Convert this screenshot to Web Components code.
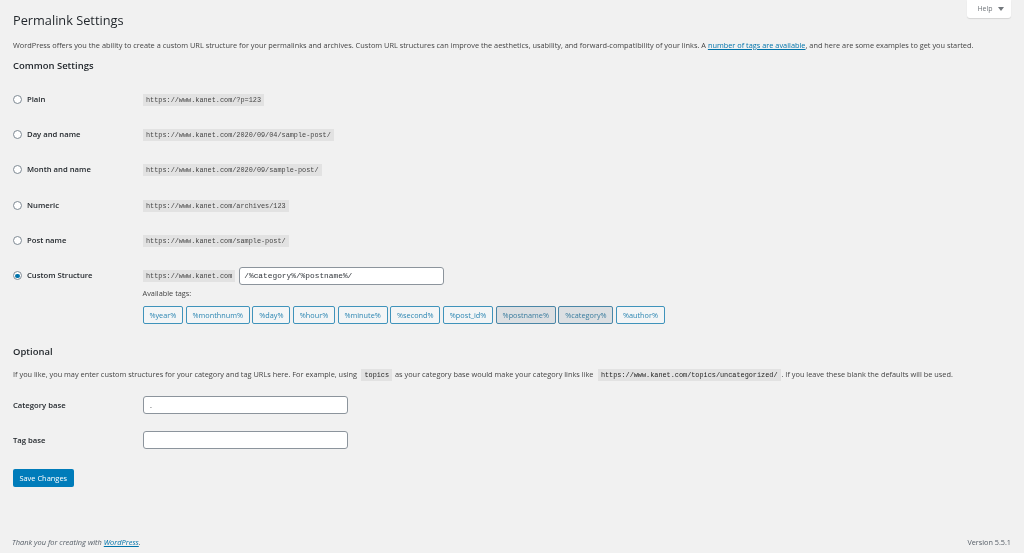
<!DOCTYPE html>
<html lang="en"><head><meta charset="utf-8"><title>Permalink Settings</title>
<style>
html,body{margin:0;padding:0;height:553px;overflow:hidden;background:#f1f1f1}
body{font:7.37px/13px "Open Sans",sans-serif;color:#444}
</style></head><body>
<wp-page>
  <wp-help slot="help"></wp-help>
  <h1 slot="title">Permalink Settings</h1>
  <wp-note slot="intro">WordPress offers you the ability to create a custom URL structure for your permalinks and archives. Custom URL structures can improve the aesthetics, usability, and forward-compatibility of your links. A <a href="#">number of tags are available</a>, and here are some examples to get you started.</wp-note>
  <wp-heading>Common Settings</wp-heading>
  <wp-options>
    <wp-radio-row label="Plain"><wp-code>https://www.kanet.com/?p=123</wp-code></wp-radio-row>
    <wp-radio-row label="Day and name"><wp-code>https://www.kanet.com/2020/09/04/sample-post/</wp-code></wp-radio-row>
    <wp-radio-row label="Month and name"><wp-code>https://www.kanet.com/2020/09/sample-post/</wp-code></wp-radio-row>
    <wp-radio-row label="Numeric"><wp-code>https://www.kanet.com/archives/123</wp-code></wp-radio-row>
    <wp-radio-row label="Post name"><wp-code>https://www.kanet.com/sample-post/</wp-code></wp-radio-row>
    <wp-radio-row label="Custom Structure" checked>
      <wp-structure base="https://www.kanet.com" value="/%category%/%postname%/"></wp-structure>
    </wp-radio-row>
  </wp-options>
  <wp-tags>
    <wp-tag>%year%</wp-tag><wp-tag>%monthnum%</wp-tag><wp-tag>%day%</wp-tag><wp-tag>%hour%</wp-tag><wp-tag>%minute%</wp-tag><wp-tag>%second%</wp-tag><wp-tag>%post_id%</wp-tag><wp-tag active>%postname%</wp-tag><wp-tag active>%category%</wp-tag><wp-tag>%author%</wp-tag>
  </wp-tags>
  <wp-heading optional>Optional</wp-heading>
  <wp-note optional>If you like, you may enter custom structures for your category and tag URLs here. For example, using <wp-code strong>topics</wp-code> as your category base would make your category links like <wp-code strong>https://www.kanet.com/topics/uncategorized/</wp-code>. If you leave these blank the defaults will be used.</wp-note>
  <wp-fields>
    <wp-field label="Category base" value="."></wp-field>
    <wp-field label="Tag base" value=""></wp-field>
  </wp-fields>
  <wp-save>Save Changes</wp-save>
  <wp-footer></wp-footer>
</wp-page>
<script>
function def(name, css, html){
  customElements.define(name, class extends HTMLElement{
    connectedCallback(){
      if(this.shadowRoot) return;
      const r=this.attachShadow({mode:'open'});
      r.innerHTML='<style>'+css+'</style>'+(typeof html==='function'?html(this):html);
    }
  });
}
const esc=s=>String(s).replace(/&/g,'&amp;').replace(/"/g,'&quot;').replace(/</g,'&lt;');
def('wp-page',`
  :host{display:flex;flex-direction:column;height:553px;box-sizing:border-box;padding:0 13px;filter:blur(.35px)}
  ::slotted(h1){font:400 12.75px/23px "Open Sans",sans-serif;color:#23282d;margin:0;padding-top:9px;height:23px}
  .help{display:flex;justify-content:flex-end;height:0}
`,`<div class="help"><slot name="help"></slot></div><slot name="title"></slot><slot name="intro"></slot><slot></slot>`);
def('wp-help',`
  :host{display:flex;align-items:center;justify-content:center;gap:5px;box-sizing:border-box;width:44px;height:17.5px;padding-left:3px;background:#fff;border-radius:0 0 3px 3px;box-shadow:0 1px 1px rgba(0,0,0,.12);color:#72777c;font-size:7px}
  i{width:0;height:0;border:3px solid transparent;border-top:4px solid #72777c;border-bottom:0}
`,`<span>Help</span><i></i>`);
def('wp-note',`
  :host{display:block;color:#444;font-size:7.37px;line-height:13px;white-space:nowrap;margin-top:7px}
  :host([optional]){margin-top:8.5px}
  ::slotted(a){color:#0073aa;text-decoration:underline}
`,`<slot></slot>`);
def('wp-heading',`
  :host{display:block;font-weight:600;font-size:9.45px;line-height:14px;color:#23282d;margin-top:7px}
  :host([optional]){margin-top:21.3px}
`,`<slot></slot>`);
def('wp-options',`:host{display:block;margin-top:8.7px}`,`<slot></slot>`);
def('wp-radio-row',`
  :host{display:grid;grid-template-columns:130px 1fr;align-items:center;height:35.3px}
  .l{display:flex;align-items:center;gap:5px;font-weight:600;color:#23282d;font-size:7.7px}
  .r{box-sizing:border-box;width:9px;height:9px;border-radius:50%;border:1px solid #7e8993;background:#fff;display:flex;align-items:center;justify-content:center;flex:none}
  .r i{width:4.5px;height:4.5px;border-radius:50%;background:#0073aa}
`,h=>`<div class="l"><span class="r">${h.hasAttribute('checked')?'<i></i>':''}</span><span>${esc(h.getAttribute('label'))}</span></div><div><slot></slot></div>`);
def('wp-code',`
  :host{display:inline-block;background:rgba(0,0,0,.06);font:400 6.85px/12px "Liberation Mono",monospace;padding:0 3px;color:#444;white-space:nowrap;vertical-align:middle}
  :host([strong]){color:#222;margin:0 1px 0 2.5px}
`,`<slot></slot>`);
def('wp-structure',`
  :host{display:flex;align-items:center;gap:4px}
  input{box-sizing:border-box;width:205px;height:17.5px;border:1px solid #8c949c;border-radius:3px;background:#fff;font:400 7.83px "Liberation Mono",monospace;color:#32373c;padding:0 4px;margin:0;outline:0}
`,h=>`<wp-code>${esc(h.getAttribute('base'))}</wp-code><input value="${esc(h.getAttribute('value'))}" aria-label="Custom structure">`);
def('wp-tags',`
  :host{display:block;padding-left:129.5px;margin-top:-6px}
  p{margin:0 0 5.5px;line-height:13px;color:#444;font-size:7.37px}
  div{display:flex;gap:2.5px}
`,`<p>Available tags:</p><div><slot></slot></div>`);
def('wp-tag',`
  :host{display:block;box-sizing:border-box;height:18px;border:1px solid #3f93bb;border-radius:2px;background:#f3f5f6;color:#2c86b2;font-size:7.3px;line-height:16px;padding:0 5.9px;white-space:nowrap}
  :host([active]){background:#dcdfe2;color:#3a7c9e;border-color:#4a86a6}
`,`<slot></slot>`);
def('wp-fields',`:host{display:block;margin-top:6.5px}`,`<slot></slot>`);
def('wp-field',`
  :host{display:grid;grid-template-columns:130px 205px;align-items:center;height:35px;font-weight:600;color:#23282d;font-size:7.7px}
  span{padding-top:1.5px}
  input{box-sizing:border-box;width:205px;height:17.5px;border:1px solid #8c949c;border-radius:3px;background:#fff;font:400 7.37px "Open Sans",sans-serif;color:#32373c;padding:0 6px;margin:0;outline:0}
`,h=>`<span>${esc(h.getAttribute('label'))}</span><input value="${esc(h.getAttribute('value'))}" aria-label="${esc(h.getAttribute('label'))}">`);
def('wp-save',`
  :host{display:flex;align-items:center;justify-content:center;box-sizing:border-box;width:60.5px;height:17.5px;background:#007cba;border-radius:2px;color:#fff;font-size:7.45px;margin-top:12px}
`,`<slot></slot>`);
def('wp-footer',`
  :host{display:flex;justify-content:space-between;margin-top:auto;padding-bottom:4.5px;color:#555d66;font-size:7.45px;line-height:13px}
  em{font-style:italic;margin-left:-1px}
  a{color:#0073aa}
  span{font-size:7.25px}
`,`<em>Thank you for creating with <a href="#">WordPress</a>.</em><span>Version 5.5.1</span>`);
</script>
</body></html>
